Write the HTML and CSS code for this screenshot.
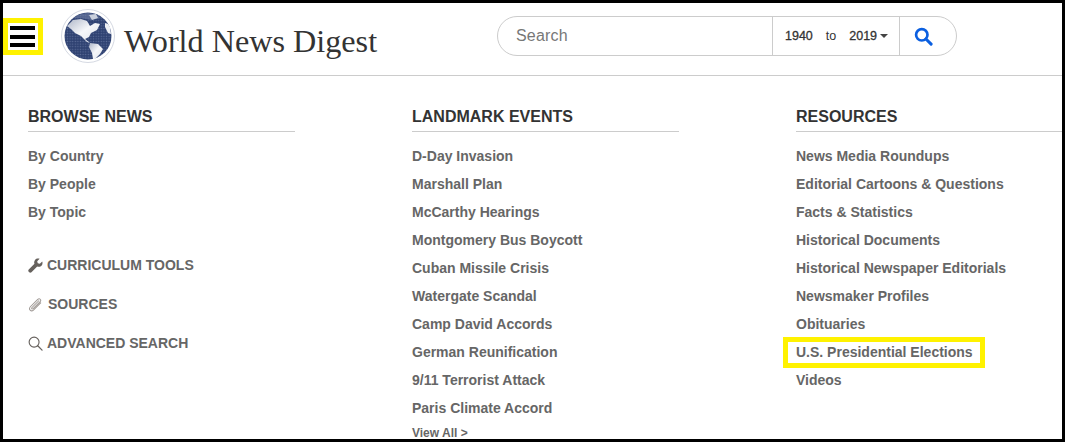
FILE: index.html
```html
<!DOCTYPE html>
<html lang="en">
<head>
<meta charset="utf-8">
<title>World News Digest</title>
<link rel="stylesheet" href="styles.css">
</head>
<body>
<div class="frame">
  <header class="topbar">
    <button class="menu" aria-label="Menu"><span></span><span></span><span></span></button>
    <a class="brand" href="#">
      <svg class="globe" viewBox="0 0 54 54" aria-hidden="true">
        <defs>
          <pattern id="dots" width="2.600" height="2.600" patternUnits="userSpaceOnUse">
            <rect width="2.600" height="2.600" fill="#2f4272"/>
            <circle cx="1.300" cy="1.300" r=".7" fill="#5a6b96"/>
          </pattern>
          <linearGradient id="land" x1="0" y1="0" x2="1" y2="1">
            <stop offset="0" stop-color="#aeb6c8"/>
            <stop offset=".5" stop-color="#f6f7fa"/>
            <stop offset="1" stop-color="#dfe3ea"/>
          </linearGradient>
        </defs>
        <circle cx="27" cy="27" r="26.500" fill="#fff" stroke="#d5d9e2"/>
        <circle cx="27" cy="27" r="23.500" fill="url(#dots)"/>
        <path class="globe-top" fill="#6e7da3" d="M12 9 20 5 27 4 34 5 40 9 30 11 20 9Z"/>
        <path fill="url(#land)" d="M6 17 12 11 20 10 26 12 29 17 34 14 39 15 36 21 30 24 28 28 24 30 29 34 26 33 20 27 14 24 10 20Z"/>
        <path fill="url(#land)" d="M29 34 37 35 42 40 39 45 34 50 32 50 31 44 28 38Z"/>
        <path fill="#c9cfdc" d="M28 6 35 5 37 9 31 11Z"/>
        <path fill="#eef0f5" d="M44 14 47 15 49 18 50 25 47 24 44 18Z"/>
      </svg>
      <span class="brand-name">World News Digest</span>
    </a>
    <form class="search">
      <span class="search-input">Search</span>
      <span class="search-years"><b>1940</b><span class="to">to</span><b>2019</b><i class="caret"></i></span>
      <span class="search-go">
        <svg viewBox="0 0 20 20" width="19" height="19" aria-hidden="true"><circle cx="8.200" cy="8.200" r="6" fill="none" stroke="#0b5fe0" stroke-width="2.800"/><path d="M12.600 12.600 18 18" stroke="#0b5fe0" stroke-width="3.200" stroke-linecap="round"/></svg>
      </span>
    </form>
  </header>
  <main class="columns">
    <section class="col">
      <h2>BROWSE NEWS</h2>
      <ul class="links">
        <li>By Country</li>
        <li>By People</li>
        <li>By Topic</li>
      </ul>
      <ul class="tools">
        <li>
          <svg class="tool-icon" viewBox="0 0 16 16" aria-hidden="true"><path fill="#66615d" d="M15.200 3.600 12.600 6.200 10.400 5.600 9.800 3.400 12.400.8C10.600.1 8.600.6 7.500 2 6.500 3.200 6.300 4.800 6.900 6.200L.8 12.300C.1 13 .1 14 .8 14.700L1.300 15.200C2 15.900 3 15.900 3.700 15.200L9.800 9.100C11.200 9.700 12.800 9.500 14 8.500 15.400 7.400 15.900 5.400 15.200 3.600Z"/></svg>
          CURRICULUM TOOLS
        </li>
        <li class="sources">
          <svg class="tool-icon" viewBox="0 0 16 16" aria-hidden="true"><path fill="none" stroke="#a09a96" stroke-width="1.100" stroke-linecap="round" d="M11.500 4 4.300 11.200C3.400 12.400 4.400 13.400 5.500 12.500L13 5C14.600 3 12.400.9 10.400 2.500L2.500 10.400C.2 13.100 3.200 16.100 5.800 14L13.500 6.300"/></svg>
          SOURCES
        </li>
        <li>
          <svg class="tool-icon" viewBox="0 0 16 16" aria-hidden="true"><circle cx="6.500" cy="6.500" r="5.300" fill="none" stroke="#66615d" stroke-width="1.200"/><path d="M10.400 10.400 15 15" stroke="#66615d" stroke-width="1.300" stroke-linecap="round"/></svg>
          ADVANCED SEARCH
        </li>
      </ul>
    </section>
    <section class="col">
      <h2>LANDMARK EVENTS</h2>
      <ul class="links">
        <li>D-Day Invasion</li>
        <li>Marshall Plan</li>
        <li>McCarthy Hearings</li>
        <li>Montgomery Bus Boycott</li>
        <li>Cuban Missile Crisis</li>
        <li>Watergate Scandal</li>
        <li>Camp David Accords</li>
        <li>German Reunification</li>
        <li>9/11 Terrorist Attack</li>
        <li>Paris Climate Accord</li>
      </ul>
      <a class="view-all" href="#">View All &gt;</a>
    </section>
    <section class="col">
      <h2>RESOURCES</h2>
      <ul class="links">
        <li>News Media Roundups</li>
        <li>Editorial Cartoons &amp; Questions</li>
        <li>Facts &amp; Statistics</li>
        <li>Historical Documents</li>
        <li>Historical Newspaper Editorials</li>
        <li>Newsmaker Profiles</li>
        <li>Obituaries</li>
        <li class="marked">U.S. Presidential Elections</li>
        <li>Videos</li>
      </ul>
    </section>
  </main>
</div>
</body>
</html>
```
FILE: styles.css
```css
*, *::after { box-sizing: border-box; }
html, body { margin: 0; padding: 0; }
body { font-family: "Liberation Sans", Arial, sans-serif; background: #fff; }
.frame {
  width: 1065px;
  height: 442px;
  border: 3px solid #000;
  overflow: hidden;
  background: #fff;
}
.topbar {
  display: flex;
  align-items: flex-start;
  height: 73px;
  border-bottom: 1px solid #ccc;
}
.menu {
  display: flex;
  flex-direction: column;
  justify-content: center;
  gap: 4.500px;
  width: 40px;
  height: 37px;
  margin-top: 15px;
  padding: 0 3px 0 2px;
  border: 5px solid #fff200;
  background: #fff;
}
.menu span { display: block; height: 4px; background: #000; }
.brand {
  display: flex;
  align-items: center;
  margin: 6px 0 0 18px;
  width: 436px;
  height: 54px;
  text-decoration: none;
}
.globe { width: 54px; height: 54px; flex: none; }
.globe-top { opacity: .6; }
.brand-name {
  margin: 10px 0 0 9px;
  font-family: "Liberation Serif", Georgia, serif;
  font-size: 32.200px;
  color: #333;
  white-space: nowrap;
}
.search {
  display: flex;
  align-items: stretch;
  width: 460px;
  height: 40px;
  margin-top: 13px;
  border: 1px solid #ccc;
  border-radius: 20px;
}
.search-input {
  width: 274px;
  padding-left: 18px;
  font-size: 16px;
  line-height: 38px;
  letter-spacing: .2px;
  color: #777;
}
.search-years {
  display: flex;
  align-items: center;
  width: 128px;
  padding-left: 12px;
  border-left: 1px solid #ccc;
  border-right: 1px solid #ccc;
  font-size: 12.500px;
  color: #333;
}
.search-years b { font-weight: 400; -webkit-text-stroke: .3px #333; }
.to { margin: 0 13px; }
.caret {
  margin-left: 3px;
  border: 4px solid transparent;
  border-top-color: #444;
  border-bottom: 0;
}
.search-go { display: flex; align-items: center; padding-left: 14px; }
.columns {
  display: grid;
  grid-template-columns: 267px 267px 267px;
  column-gap: 117px;
  padding: 31px 0 0 25px;
}
.col h2 {
  margin: 0 0 10px;
  padding-bottom: 4px;
  border-bottom: 1px solid #ccc;
  font-size: 16px;
  line-height: 20px;
  font-weight: 700;
  letter-spacing: 0;
  color: #333;
}
.col:last-child h2 { margin-right: -100px; }
ul { list-style: none; margin: 0; padding: 0; }
.links li {
  position: relative;
  height: 28px;
  font-size: 14px;
  line-height: 28px;
  font-weight: 700;
  color: #666;
  white-space: nowrap;
}
.links .marked::after {
  content: "";
  position: absolute;
  left: -13px;
  top: -1px;
  width: 202px;
  height: 31px;
  border: 5px solid #fff200;
}
.tools { margin-top: 28px; }
.tools li {
  display: flex;
  align-items: center;
  gap: 4px;
  height: 22px;
  margin-bottom: 17px;
  font-size: 14px;
  font-weight: 700;
  color: #666;
}
.tool-icon { width: 15px; height: 15px; flex: none; }
.tools .sources { gap: 5px; }
.view-all {
  display: block;
  margin-top: 4px;
  font-size: 12px;
  line-height: 14px;
  font-weight: 700;
  color: #666;
  text-decoration: none;
}
```
